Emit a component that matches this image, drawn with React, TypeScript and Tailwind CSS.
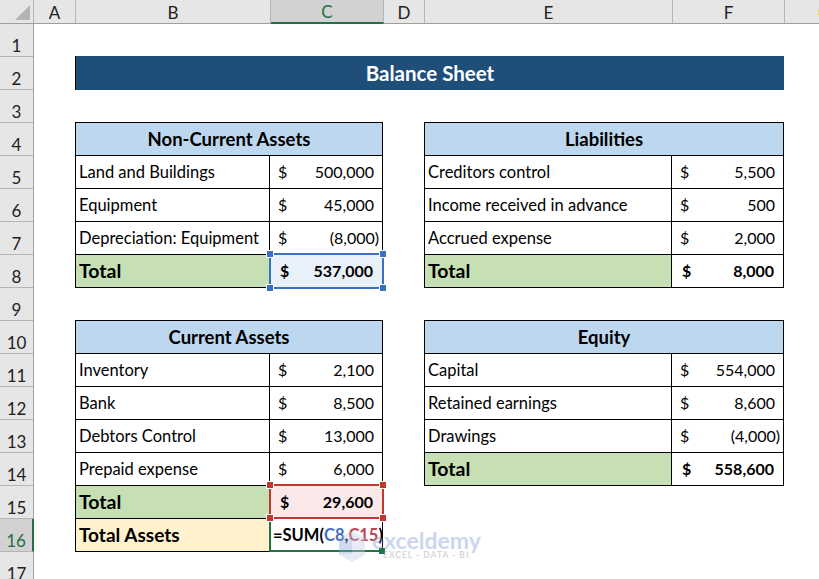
import type { ReactNode } from 'react';

const font = { fontFamily: 'Lato, "Liberation Sans", sans-serif' };

const columns = [
  { label: 'A', width: 'w-[42px]' },
  { label: 'B', width: 'w-[195px]' },
  { label: 'C', width: 'w-[113px]', active: true },
  { label: 'D', width: 'w-[41px]' },
  { label: 'E', width: 'w-[248px]' },
  { label: 'F', width: 'w-[112px]' },
];

const rows = Array.from({ length: 17 }, (_, i) => i + 1);

function Title({ text }: { text: string }) {
  return (
    <div className="h-[34px] border border-black pt-[1px] bg-[#bdd7ee] flex items-center justify-center font-bold text-[18.5px] text-black">
      {text}
    </div>
  );
}

function Amount({ value, bold, tint }: { value: string; bold?: boolean; tint?: string }) {
  return (
    <div className={`h-full flex items-center justify-between text-[16px] ${value.startsWith('(') ? 'pr-[3px]' : bold ? 'pr-[9px]' : 'pr-2'} ${bold ? 'font-bold pl-[10px]' : 'pl-2'} ${tint ?? ''}`}>
      <span>$</span>
      <span>{value}</span>
    </div>
  );
}

function TableRow({ label, value, leftWidth }: { label: string; value: string; leftWidth: string }) {
  return (
    <div className="flex h-[33px] border-x border-b border-black">
      <div className={`${leftWidth} shrink-0 border-r border-black pl-[3px] flex items-center whitespace-nowrap`}>{label}</div>
      <div className="flex-1">
        <Amount value={value} />
      </div>
    </div>
  );
}

function TotalRow({ value, leftWidth, tint }: { value: string; leftWidth: string; tint?: string }) {
  return (
    <div className="flex h-[33px] border-x border-b border-black font-bold">
      <div className={`${leftWidth} bg-[#c6e0b4] text-[19.5px] shrink-0 border-r border-black pl-[3px] flex items-center`}>Total</div>
      <div className="flex-1">
        <Amount value={value} bold tint={tint} />
      </div>
    </div>
  );
}

function Handle({ className, color }: { className: string; color: string }) {
  return <span className={`absolute w-[6px] h-[6px] outline outline-1 outline-white ${color} ${className}`} />;
}

function RangeBox({ className, line, handle }: { className: string; line: string; handle: string }) {
  return (
    <div className={`absolute ${className} border-2 ${line}`}>
      <Handle color={handle} className="-left-[4px] -top-[4px]" />
      <Handle color={handle} className="-right-[4px] -top-[4px]" />
      <Handle color={handle} className="-left-[4px] -bottom-[4px]" />
      <Handle color={handle} className="-right-[4px] -bottom-[4px]" />
    </div>
  );
}

function Sheet({ children }: { children: ReactNode }) {
  return <div className="relative flex-1 bg-white text-[16.5px] text-black">{children}</div>;
}

export default function App() {
  const lw = 'w-[194px]';
  const elw = 'w-[247px]';

  return (
    <div className="w-[819px] h-[579px] overflow-hidden bg-white flex flex-col" style={font}>
      {/* column letters */}
      <div className="flex h-[24px] shrink-0 bg-[#e6e6e6] border-b border-[#9f9f9f] text-[17px] text-[#222]">
        <div className="w-[34px] shrink-0 border-r border-[#b5b5b5]">
          <svg width="33" height="23" className="block">
            <polygon points="30,5 30,20 15,20" fill="#b4b4b4" />
          </svg>
        </div>
        {columns.map((c) => (
          <div
            key={c.label}
            className={`${c.width} shrink-0 flex items-center justify-center pt-[2px] border-r border-[#b5b5b5] ${c.active ? 'bg-[#d2d2d2] text-[#1f6e43] border-b-2 border-b-[#217346] -mb-px' : ''}`}
          >
            {c.label}
          </div>
        ))}
        <div className="flex-1 flex justify-end items-start pt-[10px]">
          <span className="w-px h-[5px] bg-[#f2d66b]" />
        </div>
      </div>

      <div className="flex flex-1 min-h-0">
        {/* row numbers */}
        <div className="w-[34px] shrink-0 bg-[#e6e6e6] border-r border-[#9f9f9f] text-[17px] leading-none text-[#222]">
          {rows.map((r) => (
            <div
              key={r}
              className={`h-[33px] flex items-end justify-center pb-[2px] border-b border-[#b5b5b5] ${r === 16 ? 'bg-[#d2d2d2] text-[#1f6e43] border-r-2 border-r-[#217346] -mr-px' : ''}`}
            >
              {r}
            </div>
          ))}
        </div>

        <Sheet>
          <div className="pl-[41px] pr-[35px] pt-[32px]">
            <div className="h-[34px] bg-[#1f4e78] flex items-center justify-center font-bold text-[20.5px] text-white border-l border-black">
              Balance Sheet
            </div>

            <div className="flex gap-[41px] mt-[32px]">
              <div className="w-[308px] shrink-0">
                <Title text="Non-Current Assets" />
                <TableRow label="Land and Buildings" value="500,000" leftWidth={lw} />
                <TableRow label="Equipment" value="45,000" leftWidth={lw} />
                <TableRow label="Depreciation: Equipment" value="(8,000)" leftWidth={lw} />
                <TotalRow value="537,000" leftWidth={lw} tint="bg-[#e8f0fa]" />
              </div>
              <div className="w-[360px] shrink-0">
                <Title text="Liabilities" />
                <TableRow label="Creditors control" value="5,500" leftWidth={elw} />
                <TableRow label="Income received in advance" value="500" leftWidth={elw} />
                <TableRow label="Accrued expense" value="2,000" leftWidth={elw} />
                <TotalRow value="8,000" leftWidth={elw} />
              </div>
            </div>

            <div className="flex gap-[41px] mt-[32px]">
              <div className="w-[308px] shrink-0">
                <Title text="Current Assets" />
                <TableRow label="Inventory" value="2,100" leftWidth={lw} />
                <TableRow label="Bank" value="8,500" leftWidth={lw} />
                <TableRow label="Debtors Control" value="13,000" leftWidth={lw} />
                <TableRow label="Prepaid expense" value="6,000" leftWidth={lw} />
                <TotalRow value="29,600" leftWidth={lw} tint="bg-[#fbe9ea]" />
                <div className="flex h-[33px] border-x border-b border-black font-bold">
                  <div className={`${lw} bg-[#fff2cc] text-[19px] shrink-0 border-r border-black pl-[3px] flex items-center`}>Total Assets</div>
                  <div className="flex-1 flex items-center pl-[3px] text-[16.5px] whitespace-nowrap">
                    =SUM(<span className="text-[#3f6fc4]">C8</span>,<span className="text-[#c0424e]">C15</span>)
                  </div>
                </div>
              </div>
              <div className="w-[360px] shrink-0">
                <Title text="Equity" />
                <TableRow label="Capital" value="554,000" leftWidth={elw} />
                <TableRow label="Retained earnings" value="8,600" leftWidth={elw} />
                <TableRow label="Drawings" value="(4,000)" leftWidth={elw} />
                <TotalRow value="558,600" leftWidth={elw} />
              </div>
            </div>
          </div>

          {/* reference highlights that Excel draws over the cells */}
          <RangeBox className="left-[235px] top-[229px] w-[115px] h-[36px]" line="border-[#3a70c4]" handle="bg-[#3a70c4]" />
          <div className="absolute left-[235px] top-[493px] w-[115px] h-[35px] border-2 border-r-0 border-[#217346]">
            <span className="absolute -right-[1px] -bottom-[4px] w-[6px] h-[6px] bg-[#217346]" />
          </div>
          <RangeBox className="left-[235px] top-[460px] w-[115px] h-[35px]" line="border-[#c0392f]" handle="bg-[#c0392f]" />

          {/* watermark */}
          <div className="absolute left-[304px] top-[506px] flex items-center gap-[6px] opacity-40 pointer-events-none">
            <svg width="28" height="33" viewBox="0 0 28 33">
              <polygon points="14,1 27,8 27,25 14,32 1,25 1,8" fill="#c4cfe8" />
              <polygon points="1,8 14,8 14,24 1,24" fill="#8ea6d8" />
            </svg>
            <div className="flex flex-col items-start leading-none -mt-[4px]">
              <span className="text-[23px] font-bold text-[#7f9bd8] leading-[22px]">exceldemy</span>
              <span className="text-[8.5px] font-bold tracking-[1px] pl-[11px] text-[#9a9a9a]">EXCEL - DATA - BI</span>
            </div>
          </div>
        </Sheet>
      </div>
    </div>
  );
}
